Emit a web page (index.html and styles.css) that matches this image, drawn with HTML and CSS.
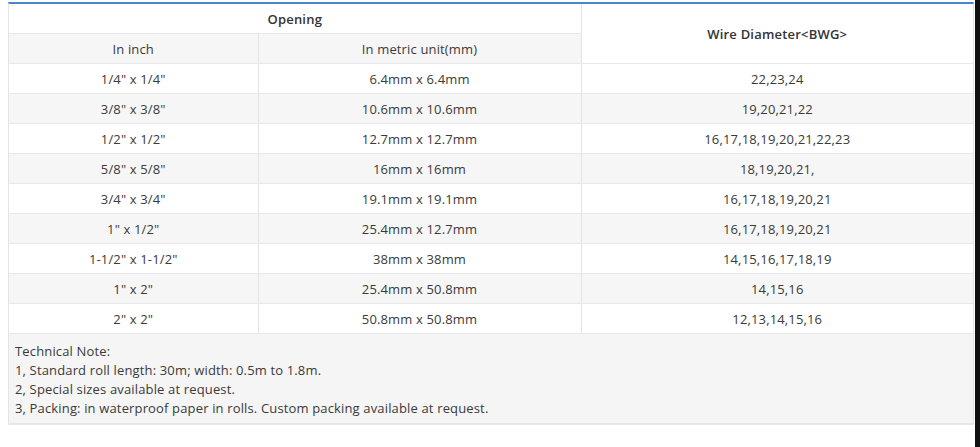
FILE: index.html
```html
<!DOCTYPE html>
<html>
<head>
<meta charset="utf-8">
<link rel="stylesheet" href="styles.css">
</head>
<body>
<div class="page">
  <main class="content">
    <div class="spec">
      <table class="spec-table">
        <colgroup>
          <col class="c1"><col class="c2"><col class="c3">
        </colgroup>
        <thead>
          <tr class="row-white">
            <th colspan="2" class="head">Opening</th>
            <th rowspan="2" class="head head-wire">Wire Diameter&lt;BWG&gt;</th>
          </tr>
          <tr class="row-gray">
            <td>In inch</td>
            <td>In metric unit(mm)</td>
          </tr>
        </thead>
        <tbody>
          <tr class="row-white"><td>1/4" x 1/4"</td><td>6.4mm x 6.4mm</td><td>22,23,24</td></tr>
          <tr class="row-gray"><td>3/8" x 3/8"</td><td>10.6mm x 10.6mm</td><td>19,20,21,22</td></tr>
          <tr class="row-white"><td>1/2" x 1/2"</td><td>12.7mm x 12.7mm</td><td>16,17,18,19,20,21,22,23</td></tr>
          <tr class="row-gray"><td>5/8" x 5/8"</td><td>16mm x 16mm</td><td>18,19,20,21,</td></tr>
          <tr class="row-white"><td>3/4" x 3/4"</td><td>19.1mm x 19.1mm</td><td>16,17,18,19,20,21</td></tr>
          <tr class="row-gray"><td>1" x 1/2"</td><td>25.4mm x 12.7mm</td><td>16,17,18,19,20,21</td></tr>
          <tr class="row-white"><td>1-1/2" x 1-1/2"</td><td>38mm x 38mm</td><td>14,15,16,17,18,19</td></tr>
          <tr class="row-gray"><td>1" x 2"</td><td>25.4mm x 50.8mm</td><td>14,15,16</td></tr>
          <tr class="row-white"><td>2" x 2"</td><td>50.8mm x 50.8mm</td><td>12,13,14,15,16</td></tr>
        </tbody>
      </table>
      <div class="note">
        <p>Technical Note:</p>
        <p>1, Standard roll length: 30m; width: 0.5m to 1.8m.</p>
        <p>2, Special sizes available at request.</p>
        <p>3, Packing: in waterproof paper in rolls. Custom packing available at request.</p>
      </div>
    </div>
  </main>
  <div class="edge"></div>
</div>
</body>
</html>
```
FILE: styles.css
```css
html, body {
  margin: 0;
  padding: 0;
  background: #ffffff;
}
body {
  font-family: "Open Sans", "DejaVu Sans", sans-serif;
  color: #3a3a3a;
  font-size: 13px;
  letter-spacing: 0.15px;
}
.page {
  display: flex;
  height: 447px;
}
.content {
  flex: 1;
  padding: 2px 1px 0 8px;
}
.edge {
  width: 5px;
  background: #111111;
}
.spec {
  border-top: 2px solid #4a86cf;
  border-left: 1px solid #e4e4e4;
  border-right: 1px solid #e4e4e4;
  border-bottom: 2px solid #e6e6e6;
}
.spec-table {
  width: 100%;
  border-collapse: collapse;
  table-layout: fixed;
}
.c1 { width: 249px; }
.c2 { width: 323px; }
.spec-table th,
.spec-table td {
  height: 29px;
  padding: 0;
  text-align: center;
  vertical-align: middle;
  border-bottom: 1px solid #e8e8e8;
  border-left: 1px solid #e4e4e4;
  font-weight: normal;
  line-height: 16px;
}
.spec-table tr > :first-child {
  border-left: none;
}
.spec-table .head {
  font-weight: 600;
  color: #333333;
  letter-spacing: 0.2px;
  border-bottom: 1px solid #e8e8e8;
}
.spec-table .head-wire {
  border-left: 1px solid #e4e4e4;
}
.row-white { background: #ffffff; }
.row-gray { background: #f6f6f6; }
.note {
  background: #f5f5f5;
  padding: 8px 6px 5px;
}
.note p {
  margin: 0;
  line-height: 19px;
}
```
